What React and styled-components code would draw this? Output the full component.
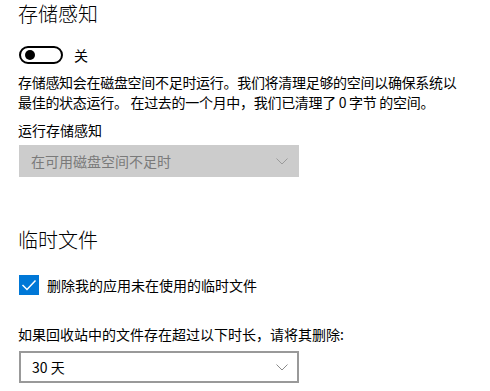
import React from "react";
import styled, { createGlobalStyle } from "styled-components";

const Global = createGlobalStyle`
  html, body { margin: 0; padding: 0; background: #ffffff; }
  body {
    font-family: "Noto Sans CJK SC", "Noto Sans", sans-serif;
    color: #000000;
    -webkit-font-smoothing: antialiased;
  }
`;

const Page = styled.div`
  width: 490px;
  height: 391px;
  box-sizing: border-box;
  padding: 0 0 0 18px;
  display: flex;
  flex-direction: column;
  overflow: hidden;
`;

const Title = styled.h2`
  margin: ${(p) => p.$top || 0}px 0 0 0;
  font-size: 20px;
  font-weight: 300;
  line-height: 28px;
  color: #000;
`;

const ToggleRow = styled.div`
  display: flex;
  align-items: center;
  gap: 11px;
  margin: 18px 0 0 1px;
  height: 18px;
`;

const Track = styled.div`
  box-sizing: border-box;
  width: 44px;
  height: 18px;
  border: 2px solid #000;
  border-radius: 9px;
  display: flex;
  align-items: center;
  padding-left: 4px;
`;

const Knob = styled.div`
  width: 10px;
  height: 10px;
  border-radius: 50%;
  background: #000;
`;

const Text = styled.div`
  font-size: 14px;
  line-height: 20px;
  margin-top: ${(p) => p.$top || 0}px;
  letter-spacing: ${(p) => (p.$tight ? "-0.3px" : "0")};
  width: ${(p) => (p.$width ? p.$width + "px" : "auto")};
  white-space: pre-wrap;
`;

const Select = styled.div`
  box-sizing: border-box;
  width: 280px;
  height: 32px;
  margin: ${(p) => p.$top || 0}px 0 0 1px;
  display: flex;
  align-items: center;
  justify-content: space-between;
  font-size: 14px;
  background: ${(p) => (p.$disabled ? "#cccccc" : "#ffffff")};
  border: ${(p) => (p.$disabled ? "none" : "2px solid #999999")};
  color: ${(p) => (p.$disabled ? "#7a7a7a" : "#000000")};
  padding-left: ${(p) => (p.$disabled ? "12px" : "11px")};
  padding-right: ${(p) => (p.$disabled ? "11px" : "9px")};
`;

const CheckRow = styled.div`
  display: flex;
  align-items: center;
  gap: 8px;
  margin: 21px 0 0 1px;
  font-size: 14px;
  line-height: 20px;
`;

const CheckBox = styled.div`
  width: 20px;
  height: 20px;
  background: #0078d7;
  display: flex;
  align-items: center;
  justify-content: center;
`;

const Chevron = ({ color }) => (
  <svg width="12" height="7" viewBox="0 0 12 7" fill="none">
    <polyline points="0.5,0.5 6,6 11.5,0.5" stroke={color} strokeWidth="1" />
  </svg>
);

export default function App() {
  return (
    <>
      <Global />
      <Page>
        <Title>存储感知</Title>
        <ToggleRow>
          <Track>
            <Knob />
          </Track>
          <Text>关</Text>
        </ToggleRow>
        <Text $top={8} $tight $width={452}>
          存储感知会在磁盘空间不足时运行。我们将清理足够的空间以确保系统以最佳的状态运行。 在过去的一个月中，我们已清理了 0 字节 的空间。
        </Text>
        <Text $top={8}>运行存储感知</Text>
        <Select $disabled $top={5}>
          <span>在可用磁盘空间不足时</span>
          <Chevron color="#9a9a9a" />
        </Select>
        <Title $top={49}>临时文件</Title>
        <CheckRow>
          <CheckBox>
            <svg width="20" height="20" viewBox="0 0 20 20" fill="none">
              <polyline points="3.5,10 8,14.5 16.5,5.5" stroke="#ffffff" strokeWidth="1.5" />
            </svg>
          </CheckBox>
          <span>删除我的应用未在使用的临时文件</span>
        </CheckRow>
        <Text $top={29}>如果回收站中的文件存在超过以下时长，请将其删除:</Text>
        <Select $top={7}>
          <span>30 天</span>
          <Chevron color="#8a8a8a" />
        </Select>
      </Page>
    </>
  );
}
